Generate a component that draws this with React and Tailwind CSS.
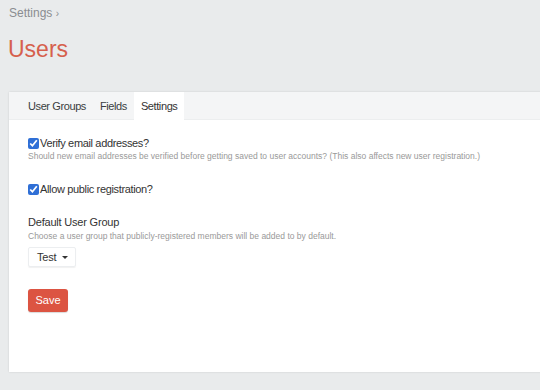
export default function App() {
  return (
    <div
      className="w-[540px] h-[390px] overflow-hidden bg-[#e9ebec] text-[#333]"
      style={{ fontFamily: '"Liberation Sans", Arial, sans-serif' }}
    >
      <div className="pl-[9px] pt-[5px] text-[12px] text-[#8a8d90] leading-[16px]">
        Settings <span className="text-[10px]">›</span>
      </div>
      <h1 className="pl-[8px] mt-[13px] text-[23px] leading-[28px] text-[#d6604d] font-normal">
        Users
      </h1>
      <div className="ml-[9px] mt-[29px] w-[540px] h-[280px] bg-white shadow-[0_0_2px_rgba(0,0,0,0.12)]">
        <div className="flex h-[28px] bg-[#f4f5f6] border-b border-[#eceeef] pl-[12px] text-[11px] tracking-[-0.4px] leading-[28px]">
          <div className="px-[7px] text-[#3a3d40]">User Groups</div>
          <div className="px-[7px] text-[#3a3d40]">Fields</div>
          <div className="px-[7px] bg-white h-[29px] text-[#333]">Settings</div>
        </div>
        <div className="pl-[19px] pt-[16px]">
          <label className="flex items-center gap-[1px] text-[11px] tracking-[-0.35px] leading-[14px] text-[#333]">
            <input type="checkbox" defaultChecked className="w-[11px] h-[11px] m-0 accent-[#2f6fd6]" />
            Verify email addresses?
          </label>
          <p className="text-[8.5px] leading-[12px] text-[#999]">
            Should new email addresses be verified before getting saved to user accounts? (This also affects new user registration.)
          </p>
          <label className="flex items-center gap-[1px] mt-[20px] text-[11px] tracking-[-0.35px] leading-[14px] text-[#333]">
            <input type="checkbox" defaultChecked className="w-[11px] h-[11px] m-0 accent-[#2f6fd6]" />
            Allow public registration?
          </label>
          <div className="mt-[19px] text-[11px] tracking-[-0.2px] leading-[14px]">Default User Group</div>
          <p className="mt-[1px] text-[8.5px] leading-[12px] text-[#999]">
            Choose a user group that publicly-registered members will be added to by default.
          </p>
          <div className="mt-[5px] flex items-center justify-between w-[48px] h-[20px] pl-[8px] pr-[7px] border border-[#eceef0] rounded-[2px] shadow-[0_1px_1px_rgba(0,0,0,0.06)] text-[11px] tracking-[-0.2px]">
            Test
            <span className="w-0 h-0 border-l-[3px] border-r-[3px] border-t-[3px] border-l-transparent border-r-transparent border-t-[#333]" />
          </div>
          <div className="mt-[20px]">
            <button className="w-[40px] h-[23px] rounded-[3px] bg-[#dc5442] text-white text-[11px] leading-[23px] shadow-[0_1px_1px_rgba(0,0,0,0.15)]">
              Save
            </button>
          </div>
        </div>
      </div>
    </div>
  );
}
